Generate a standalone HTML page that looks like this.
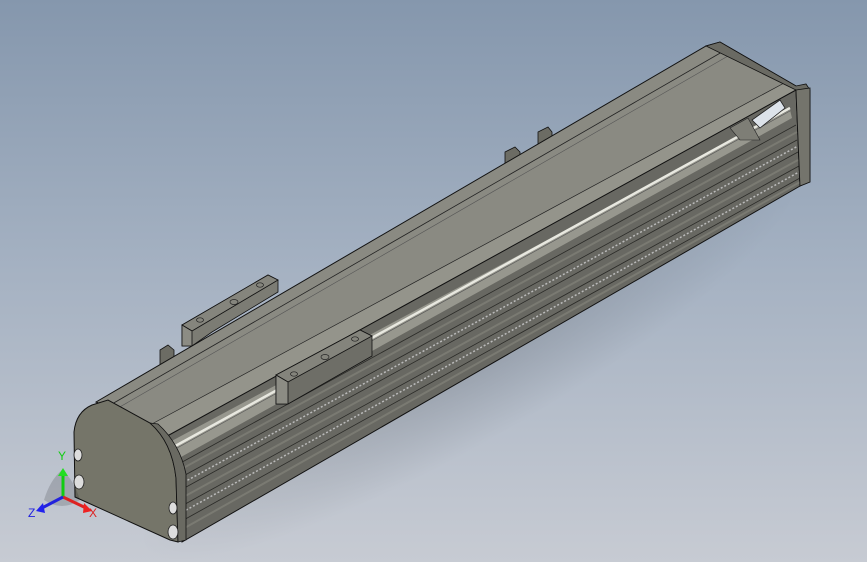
<!DOCTYPE html>
<html><head><meta charset="utf-8"><style>
html,body{margin:0;padding:0;width:867px;height:562px;overflow:hidden}
body{background:linear-gradient(180deg,#8597ad 0%,#a3b0c1 45%,#c7cbd3 100%);position:relative}
svg{position:absolute;left:0;top:0;display:block}
</style></head><body>
<svg width="867" height="562" viewBox="0 0 867 562" xmlns="http://www.w3.org/2000/svg">
<defs>
<radialGradient id="sh" cx="0.5" cy="0.5" r="0.5"><stop offset="0" stop-color="#000" stop-opacity="0.15"/><stop offset="1" stop-color="#000" stop-opacity="0"/></radialGradient>
</defs>
<ellipse cx="470" cy="360" rx="380" ry="80" transform="rotate(-30 470 360)" fill="url(#sh)"/>
<polygon points="505,152 515,147 520,152 520,166 505,172" fill="#6c6c64" stroke="#111" stroke-width="0.8"/>
<polygon points="538,132 548,127 552,132 552,146 538,152" fill="#6c6c64" stroke="#111" stroke-width="0.8"/>
<polygon points="160,350 168,345 174,350 174,364 160,370" fill="#6c6c64" stroke="#111" stroke-width="0.8"/>
<polygon points="182,325 268,275 278,280 278,292 212,332 192,346 182,346" fill="#7c7c74" stroke="#111" stroke-width="0.8"/>
<polygon points="182,325 268,275 278,280 192,331" fill="#85857d" stroke="#111" stroke-width="0.8"/>
<polygon points="182,325 192,331 192,346 182,346" fill="#8c8c84" stroke="#111" stroke-width="0.8"/>
<polygon points="96,402 706,46 720,42 796,86 156,428" fill="#8a8a82" stroke="#111" stroke-width="1"/>
<line x1="112" y1="404" x2="722" y2="52" stroke="#222" stroke-width="0.8"/>
<line x1="118" y1="408" x2="728" y2="56" stroke="#555" stroke-width="0.6"/>
<polygon points="150,425 786,82 796,90 160,440" fill="#94948b" stroke="#222" stroke-width="0.7"/>
<polygon points="160,440 790,108 795,118 172,462" fill="#8e8e86" stroke="#333" stroke-width="0.6"/>
<polygon points="160,440 796,90 800,186 182,542" fill="#686862" stroke="#111" stroke-width="1"/>
<polygon points="166,444 790,110 792,118 172,462" fill="#97978e"/>
<line x1="168" y1="450" x2="790" y2="108" stroke="#e8e8e0" stroke-width="2.5"/>
<line x1="168" y1="453" x2="790" y2="111" stroke="#555" stroke-width="0.6"/>
<g stroke-width="0.8" fill="none">
<line x1="175" y1="466" x2="796" y2="125" stroke="#2a2a27"/>
<line x1="176" y1="472" x2="797" y2="132" stroke="#7a7a72" stroke-width="2"/>
<line x1="176" y1="480" x2="797" y2="140" stroke="#2a2a27"/>
<line x1="177" y1="486" x2="798" y2="146" stroke="#bbb" stroke-dasharray="2 2" stroke-width="1.5"/>
<line x1="177" y1="492" x2="798" y2="152" stroke="#2a2a27"/>
<line x1="178" y1="500" x2="798" y2="160" stroke="#7a7a72" stroke-width="2"/>
<line x1="178" y1="508" x2="799" y2="166" stroke="#2a2a27"/>
<line x1="179" y1="514" x2="799" y2="172" stroke="#bbb" stroke-dasharray="2 2" stroke-width="1.5"/>
<line x1="180" y1="522" x2="800" y2="178" stroke="#2a2a27"/>
<line x1="181" y1="530" x2="800" y2="182" stroke="#7a7a72" stroke-width="2"/>
</g>
<polygon points="276,375 360,330 372,336 372,356 288,404 276,404" fill="#6e6e67" stroke="#111" stroke-width="0.8"/>
<polygon points="276,375 360,330 372,336 288,382" fill="#84847c" stroke="#111" stroke-width="0.8"/>
<polygon points="276,375 288,382 288,404 276,404" fill="#8c8c84" stroke="#111" stroke-width="0.8"/>
<g fill="none" stroke="#222" stroke-width="0.7">
<ellipse cx="234" cy="302" rx="4" ry="2.5"/><ellipse cx="200" cy="320" rx="3.5" ry="2.2"/><ellipse cx="260" cy="285" rx="3.5" ry="2.2"/>
<ellipse cx="325" cy="357" rx="4" ry="2.5"/><ellipse cx="294" cy="374" rx="3.5" ry="2.2"/><ellipse cx="355" cy="339" rx="3.5" ry="2.2"/>
</g>
<polygon points="706,46 720,42 796,86 806,84 810,90 810,182 800,186 796,90" fill="#6a6a63" stroke="#111" stroke-width="0.8"/>
<polygon points="796,90 810,88 810,182 800,186" fill="#74746c" stroke="#111" stroke-width="0.8"/>
<polygon points="752,120 780,100 785,108 760,128" fill="#dde3ea" stroke="#222" stroke-width="0.8"/>
<polygon points="730,128 748,118 760,140 740,140" fill="#7e7e76" stroke="#222" stroke-width="0.6"/>
<path d="M74,432 Q76,412 92,405 L108,400 L150,423 Q172,442 176,478 L178,542 L170,540 L75,497 Z" fill="#757569" stroke="#111" stroke-width="1"/>
<path d="M150,423 Q172,442 176,478 L178,542 L186,540 L186,474 Q180,444 158,424 Z" fill="#6a6a62" stroke="#111" stroke-width="0.8"/>
<g fill="#ddd" stroke="#222" stroke-width="0.8">
<ellipse cx="78" cy="455" rx="4" ry="6"/><ellipse cx="79" cy="482" rx="5" ry="7"/>
<ellipse cx="173" cy="508" rx="4" ry="6"/><ellipse cx="173" cy="532" rx="5" ry="7"/>
</g>
<path d="M44,500 Q50,480 62,470 Q74,480 80,500 Q62,512 44,500Z" fill="#000" opacity="0.15"/>
<line x1="63" y1="497" x2="63" y2="474" stroke="#1c1" stroke-width="3"/>
<polygon points="58,476 63,468 68,476" fill="#2d2"/>
<line x1="63" y1="497" x2="86" y2="508" stroke="#d22" stroke-width="3"/>
<polygon points="84,503 92,511 83,513" fill="#e22"/>
<line x1="63" y1="497" x2="42" y2="508" stroke="#22d" stroke-width="3"/>
<polygon points="43,503 36,511 45,513" fill="#22e"/>
<text x="58" y="460" font-family="Liberation Sans,sans-serif" font-size="12" fill="#1c1">Y</text>
<text x="89" y="517" font-family="Liberation Sans,sans-serif" font-size="12" fill="#d22">X</text>
<text x="28" y="517" font-family="Liberation Sans,sans-serif" font-size="12" fill="#22d">Z</text>
</svg>
</body></html>
